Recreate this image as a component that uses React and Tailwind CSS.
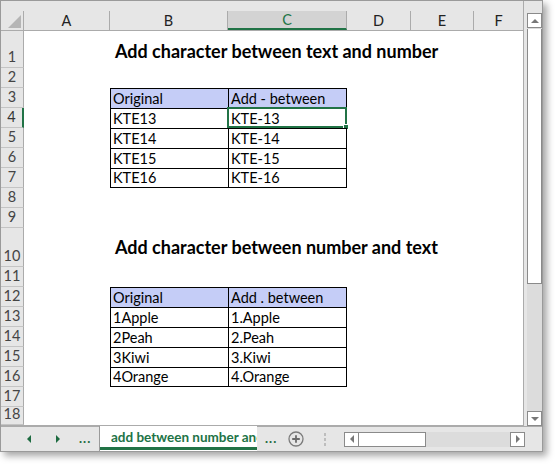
import React from "react";

const COLS = [
  { key: "A", w: "w-[86px]" },
  { key: "B", w: "w-[118px]" },
  { key: "C", w: "w-[119px]" },
  { key: "D", w: "w-[64px]" },
  { key: "E", w: "w-[63px]" },
  { key: "F", w: "w-[49px]" },
];

const ROWS = [
  { n: 1, h: "h-[37px]", title: "Add character between text and number", tpb: "pb-[6px]" },
  { n: 2, h: "h-[20px]" },
  { n: 3, h: "h-[20px]", t: ["Original", "Add - between"], head: true, first: true },
  { n: 4, h: "h-[20px]", t: ["KTE13", "KTE-13"], sel: true },
  { n: 5, h: "h-[20px]", t: ["KTE14", "KTE-14"] },
  { n: 6, h: "h-[20px]", t: ["KTE15", "KTE-15"] },
  { n: 7, h: "h-[20px]", t: ["KTE16", "KTE-16"], last: true },
  { n: 8, h: "h-[20px]" },
  { n: 9, h: "h-[20px]" },
  { n: 10, h: "h-[39px]", title: "Add character between number and text", tpb: "pb-[9px]" },
  { n: 11, h: "h-[20px]" },
  { n: 12, h: "h-[20px]", t: ["Original", "Add . between"], head: true, first: true },
  { n: 13, h: "h-[20px]", t: ["1Apple", "1.Apple"] },
  { n: 14, h: "h-[20px]", t: ["2Peah", "2.Peah"] },
  { n: 15, h: "h-[20px]", t: ["3Kiwi", "3.Kiwi"] },
  { n: 16, h: "h-[20px]", t: ["4Orange", "4.Orange"], last: true },
  { n: 17, h: "h-[20px]" },
  { n: 18, h: "h-[18px]" },
];

function TableCell({ text, row, right }) {
  const bg = row.head ? "bg-[#c5cdf7]" : "bg-white";
  const bottom = row.last ? "border-b border-b-black" : "";
  const rightB = right ? "border-r border-r-black" : "";
  return (
    <div
      className={`relative ${right ? "w-[119px]" : "w-[118px]"} h-full ${bg} border-t border-l border-t-black border-l-black ${bottom} ${rightB} flex items-end pl-[2px] pb-[1px] leading-[16px] text-[14.5px] text-black`}
    >
      <span>{text}</span>
      {row.sel && right && (
        <div className="absolute -left-[2px] -top-[2px] w-[120px] h-[21px] border-2 border-[#217346] pointer-events-none">
          <div className="absolute -right-[4px] -bottom-[4px] w-[6px] h-[6px] bg-[#217346] border border-white" />
        </div>
      )}
    </div>
  );
}

function Tri({ dir, className }) {
  const pts = {
    up: "0,5 4,1 8,5",
    down: "0,1 4,5 8,1",
    left: "5,0 1,4 5,8",
    right: "1,0 5,4 1,8",
  }[dir];
  const vb = dir === "up" || dir === "down" ? "0 0 8 6" : "0 0 6 8";
  const size = dir === "up" || dir === "down" ? "w-[8px] h-[6px]" : "w-[6px] h-[8px]";
  return (
    <svg viewBox={vb} className={`${size} ${className || ""}`}>
      <polygon points={pts} fill="currentColor" />
    </svg>
  );
}

export default function App() {
  return (
    <div
      className="w-[555px] h-[464px] bg-white"
      style={{ fontFamily: "Lato, 'Open Sans', sans-serif" }}
    >
      <div className="w-[543px] h-[452px] border border-[#9a9a9a] bg-[#e6e6e6] flex flex-col shadow-[4px_4px_7px_rgba(0,0,0,0.35)] overflow-hidden">
        {/* main area */}
        <div className="flex h-[425px]">
          {/* sheet */}
          <div className="w-[522px] flex flex-col">
            <div className="h-[10px]" />
            {/* column headers */}
            <div className="flex h-[20px] border-b border-[#ababab]">
              <div className="w-[23px] h-full border-r border-[#ababab] flex items-end justify-end pr-[2px] pb-[2px]">
                <svg viewBox="0 0 13 13" className="w-[13px] h-[13px]">
                  <polygon points="13,0 13,13 0,13" fill="#b5b5b5" />
                </svg>
              </div>
              {COLS.map((c) => (
                <div
                  key={c.key}
                  className={`${c.w} h-full flex items-center justify-center text-[14.5px] ${
                    c.key === "C"
                      ? "bg-[#d3d3d3] text-[#217346] border-b-2 border-b-[#217346] border-r border-r-[#ababab]"
                      : c.key === "F"
                      ? "text-[#222]"
                      : "text-[#222] border-r border-[#ababab]"
                  }`}
                >
                  {c.key}
                </div>
              ))}
            </div>
            {/* rows */}
            <div className="flex-1 bg-white flex flex-col border-b border-[#ababab]">
              {ROWS.map((r) => (
                <div key={r.n} className={`flex ${r.h} shrink-0`}>
                  <div
                    className={`w-[23px] h-full flex items-end justify-center pb-[2px] text-[14.5px] leading-[16px] bg-[#e6e6e6] border-b border-b-[#c4c4c4] ${
                      r.sel
                        ? "border-r-2 border-r-[#217346] bg-[#d3d3d3] text-[#333]"
                        : "border-r border-r-[#ababab] text-[#444]"
                    }`}
                  >
                    {r.n}
                  </div>
                  <div className="w-[86px] h-full" />
                  {r.t ? (
                    <>
                      <TableCell text={r.t[0]} row={r} />
                      <TableCell text={r.t[1]} row={r} right />
                    </>
                  ) : (
                    <>
                      <div className="w-[118px] h-full relative flex items-end">
                        {r.title && (
                          <span className={`pl-[5px] ${r.tpb} whitespace-nowrap font-bold text-[18px] leading-[22px] text-black`}>
                            {r.title}
                          </span>
                        )}
                      </div>
                      <div className="w-[119px] h-full" />
                    </>
                  )}
                  <div className="w-[64px] h-full" />
                  <div className="w-[63px] h-full" />
                  <div className="w-[49px] h-full" />
                </div>
              ))}
            </div>
          </div>
          {/* vertical scrollbar */}
          <div className="w-[19px] border-l border-[#ababab] flex flex-col pt-[12px] pl-[3px] pr-[1px] pb-[0px]">
            <div className="w-[15px] flex-1 flex flex-col bg-[#dcdcdc]">
              <div className="h-[15px] bg-white border border-[#8a8a8a] flex items-center justify-center text-[#777]">
                <Tri dir="up" />
              </div>
              <div className="h-[255px] bg-white border border-[#8a8a8a] border-t-0 mt-[1px]" />
              <div className="flex-1" />
              <div className="h-[15px] bg-white border border-[#8a8a8a] flex items-center justify-center text-[#777]">
                <Tri dir="down" />
              </div>
            </div>
          </div>
        </div>
        {/* tab bar */}
        <div className="flex h-[25px] items-stretch">
          <div className="w-[98px] flex items-center pl-[25px] text-[#1d6b40] border-t border-[#ababab]">
            <Tri dir="left" className="ml-[0px]" />
            <Tri dir="right" className="ml-[23px]" />
            <span className="ml-[18px] font-bold text-[13px] leading-none tracking-[1px] -mt-[2px]">...</span>
          </div>
          <div className="w-[158px] bg-white border-l border-[#9a9a9a] flex flex-col">
            <div className="flex-1 min-w-0 flex items-center pl-[11px]">
              <span className="block flex-1 min-w-0 overflow-hidden whitespace-nowrap font-bold text-[13.5px] text-[#217346] leading-[16px]">
                add between number and text
              </span>
            </div>
            <div className="h-[3px] bg-[#217346] mb-[1px]" />
          </div>
          <div className="flex-1 flex items-center border-t border-[#ababab]">
            <span className="ml-[8px] font-bold text-[13px] leading-none tracking-[1px] text-[#1d6b40] -mt-[2px]">...</span>
            <svg viewBox="0 0 16 16" className="w-[16px] h-[16px] ml-[11px]">
              <circle cx="8" cy="8" r="7" fill="none" stroke="#7b7b7b" strokeWidth="1.3" />
              <path d="M8 4.2v7.6M4.2 8h7.6" stroke="#6b6b6b" strokeWidth="1.8" />
            </svg>
            <div className="ml-[20px] flex flex-col gap-[2px]">
              <div className="w-[2px] h-[3px] bg-[#bdbdbd]" />
              <div className="w-[2px] h-[3px] bg-[#bdbdbd]" />
              <div className="w-[2px] h-[3px] bg-[#bdbdbd]" />
            </div>
            <div className="ml-[18px] w-[181px] h-[15px] bg-[#dcdcdc] flex">
              <div className="w-[15px] h-full bg-white border border-[#8a8a8a] flex items-center justify-center text-[#777]">
                <Tri dir="left" />
              </div>
              <div className="w-[67px] h-full bg-white border border-[#8a8a8a] border-l-0" />
              <div className="flex-1" />
              <div className="w-[15px] h-full bg-white border border-[#8a8a8a] flex items-center justify-center text-[#777]">
                <Tri dir="right" />
              </div>
            </div>
            <div className="flex-1" />
          </div>
        </div>
      </div>
    </div>
  );
}
